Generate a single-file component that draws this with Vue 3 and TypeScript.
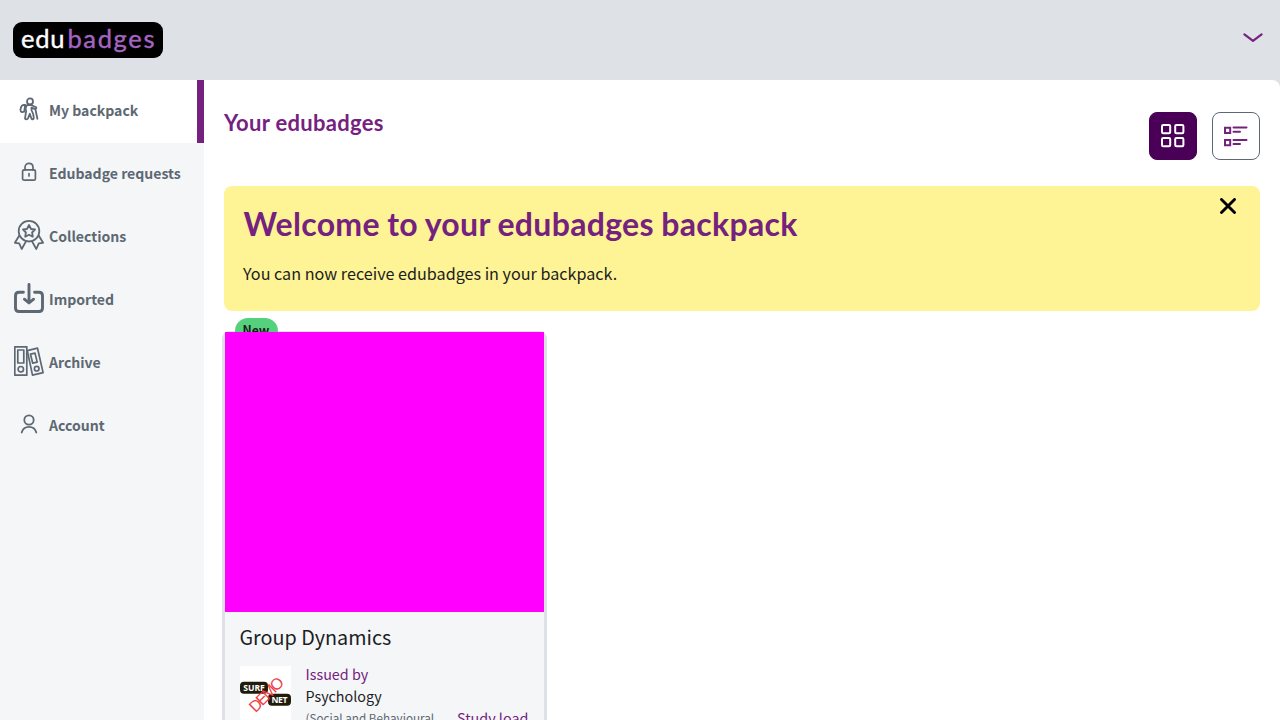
<script setup lang="ts">
import { ref } from 'vue'

interface NavItem {
  id: string
  label: string
}

const items: NavItem[] = [
  { id: 'backpack', label: 'My backpack' },
  { id: 'requests', label: 'Edubadge requests' },
  { id: 'collections', label: 'Collections' },
  { id: 'imported', label: 'Imported' },
  { id: 'archive', label: 'Archive' },
  { id: 'account', label: 'Account' },
]
const active = ref('backpack')
const view = ref<'grid' | 'list'>('grid')
const showWelcome = ref(true)
</script>

<template>
  <div class="page">
    <header class="header">
      <div class="logo"><span class="edu">edu</span><span class="badges">badges</span></div>
      <svg class="chevron" width="22" height="12" viewBox="0 0 22 12"><path d="M2.4 2.4 L11 8.8 L19.6 2.4" /></svg>
    </header>
    <div class="body">
      <nav class="sidebar">
        <a v-for="item in items" :key="item.id" class="nav-item" :class="{ active: item.id === active }" @click="active = item.id">
          <span class="icon">
            <svg v-if="item.id === 'backpack'" width="20" height="24" viewBox="0 0 20 24" stroke-width="1.8">
              <circle cx="11" cy="4.4" r="3" />
              <path d="M6.2 8 C3.2 7.2 1.8 9.8 1.5 12.6 C1.4 15 2.8 15.5 5.2 14.6 L6.2 8" />
              <path d="M8.4 7.8 C6.6 9.5 6.3 12 7.2 14 M8.4 7.8 L12.5 8.2 L17.2 10.3 C17.8 11.5 16.6 12.2 15.6 11.8 L12.4 10.6 L12.6 13.4 C14 15.8 14.9 18.5 14.8 21 C14.8 22.6 13 22.6 12.4 21.5 L10.8 16.8 L9 21.4 C8.4 22.7 6.6 22.6 6 21.5 C6.5 19 6.6 16.5 7.2 14 M16.4 12.3 L18.4 21.8" />
            </svg>
            <svg v-else-if="item.id === 'requests'" width="16" height="20" viewBox="0 0 16 20" stroke-width="1.7">
              <rect x="1.6" y="7.8" width="12.8" height="10.4" rx="1.5" />
              <path d="M4 8 V5.5 C4 0 12 0 12 5.5 V8 M8 11.7 V14" />
            </svg>
            <svg v-else-if="item.id === 'collections'" width="30" height="30" viewBox="0 0 30 30" stroke-width="1.8">
              <circle cx="15" cy="11.2" r="10.3" />
              <path d="M15 5 L17 9 L21 9.5 L18.1 12.5 L18.8 16.7 L15 14.7 L11.2 16.7 L11.9 12.5 L9 9.5 L13 9 Z" />
              <path d="M5.3 15.5 L.9 22.8 L5.2 23.4 L7.7 29 L12 21.4 M24.7 15.5 L29.1 22.8 L24.8 23.4 L22.3 29 L18 21.4" />
            </svg>
            <svg v-else-if="item.id === 'imported'" width="30" height="32" viewBox="0 0 30 32" stroke-width="2.9">
              <path d="M9.4 10.2 H5 Q1.5 10.2 1.5 13.8 V26 Q1.5 29.5 5 29.5 H25 Q28.5 29.5 28.5 26 V13.8 Q28.5 10.2 25 10.2 H20.6 M15 2.4 V20.5 M10.4 17.2 L15 21 L19.6 17.2" />
            </svg>
            <svg v-else-if="item.id === 'archive'" width="30" height="30" viewBox="0 0 30 30" stroke-width="1.7">
              <rect x=".8" y=".8" width="12" height="28.4" />
              <rect x="3.8" y="4" width="6" height="13" />
              <circle cx="6.8" cy="23.2" r="2.7" />
              <path d="M13.3 4.7 L23.5 2.2 L29.1 26.6 L18.5 29.1 Z" />
              <path d="M16.5 8.2 L21 7.1 L23.2 16.1 L18.7 17.2 Z" />
              <circle cx="22.7" cy="22.7" r="2.3" />
            </svg>
            <svg v-else width="18" height="20" viewBox="0 0 18 20" stroke-width="1.8">
              <circle cx="9" cy="6" r="4.7" />
              <path d="M1.7 18.5 C3.8 11 14.2 11 16.3 18.5" />
            </svg>
          </span>
          <span class="label">{{ item.label }}</span>
        </a>
      </nav>
      <main class="main">
        <div class="title-row">
          <h2>Your edubadges</h2>
          <div class="views">
            <button class="view" :class="{ on: view === 'grid' }" aria-label="Grid" @click="view = 'grid'">
              <svg width="24" height="24" viewBox="0 0 24 24">
                <rect x="1" y="1" width="8.2" height="8.2" rx="1.2" /><rect x="14.2" y="1" width="8.2" height="8.2" rx="1.2" />
                <rect x="1" y="14" width="8.2" height="8.2" rx="1.2" /><rect x="14.2" y="14" width="8.2" height="8.2" rx="1.2" />
              </svg>
            </button>
            <button class="view" :class="{ on: view === 'list' }" aria-label="List" @click="view = 'list'">
              <svg width="24" height="22" viewBox="0 0 24 22">
                <path d="M1 2.7 H6.2 V7.9 H1 Z M1 15 H6.2 V20.2 H1 Z M9.5 2.6 H22.5 M9.5 6.7 H16 M9.5 15 H22.5 M9.5 19.1 H16" />
              </svg>
            </button>
          </div>
        </div>
        <section v-if="showWelcome" class="welcome">
          <h1>Welcome to your edubadges backpack</h1>
          <p>You can now receive edubadges in your backpack.</p>
          <button class="close" aria-label="Close" @click="showWelcome = false">
            <svg width="16" height="16" viewBox="0 0 16 16"><path d="M1.5 1.5 L14.5 14.5 M14.5 1.5 L1.5 14.5" /></svg>
          </button>
        </section>
        <article class="card">
          <span class="new">New</span>
          <div class="art"></div>
          <div class="content">
            <h3>Group Dynamics</h3>
            <div class="details">
              <svg class="issuer-logo" width="51" height="54" viewBox="0 0 51 54">
                <rect width="51" height="54" fill="#fff" />
                <rect x="0" y="15.7" width="28" height="12" rx="4" fill="#211b0b" />
                <rect x="28" y="27.7" width="23" height="12" rx="4" fill="#211b0b" />
                <text x="3.3" y="24.7" class="surf" textLength="21.5">SURF</text>
                <text x="31.5" y="36.8" class="surf" textLength="16">NET</text>
                <text x="15.4" y="47.2" class="demo" transform="rotate(-45 15.4 47.2)" textLength="42">DEMO</text>
              </svg>
              <div class="issuer">
                <div class="purple">Issued by</div>
                <div>Psychology</div>
                <div class="faculty">(Social and Behavioural</div>
              </div>
              <div class="study purple">Study load</div>
            </div>
          </div>
        </article>
      </main>
    </div>
  </div>
</template>

<style>
body { margin: 0; overflow: hidden; }
</style>

<style scoped>
.page { width: 1280px; height: 720px; overflow: hidden; display: flex; flex-direction: column; background: #dee1e6; font-family: "Noto Sans CJK SC", "Noto Sans", sans-serif; color: #1c1d1f; }
.header { height: 80px; flex: none; display: flex; justify-content: space-between; align-items: center; padding: 0 16px 0 13px; box-sizing: border-box; }
.logo { width: 150px; height: 36px; box-sizing: border-box; background: #000; border-radius: 9px; padding-left: 8px; font: 25.5px/33px Lato, sans-serif; white-space: nowrap; }
.edu { color: #fff; letter-spacing: .8px; -webkit-text-stroke: .4px #fff; }
.badges { margin-left: 2px; color: #a565c2; letter-spacing: 1.65px; -webkit-text-stroke: .4px #a565c2; }
.chevron { margin-top: -4px; fill: none; stroke: #75217f; stroke-width: 2.2; stroke-linecap: round; stroke-linejoin: round; }
.body { height: 640px; display: flex; }
.sidebar { width: 204px; flex: none; background: #f4f6f8; }
.nav-item { height: 63px; box-sizing: border-box; display: flex; align-items: center; padding-left: 14px; color: #5d6873; cursor: pointer; }
.nav-item.active { background: #fff; border-right: 7px solid #75217f; }
.icon { width: 30px; height: 32px; margin: -5px 5px 0 0; display: flex; align-items: center; justify-content: center; }
.icon svg { fill: none; stroke: currentColor; stroke-linecap: round; stroke-linejoin: round; flex: none; }
.label { margin-top: -3px; font-size: 14.05px; font-weight: 700; line-height: 24px; white-space: nowrap; }
.main { flex: 1; min-width: 0; background: #fff; border-top-right-radius: 8px; padding: 32px 20px 0; box-sizing: border-box; }
.title-row { height: 48px; display: flex; justify-content: space-between; margin-bottom: 26px; }
h1, h2, h3, p { margin: 0; white-space: nowrap; }
h1, h2 { color: #75217f; font-family: Lato, sans-serif; font-weight: 700; }
h2 { font-size: 22px; line-height: 22px; letter-spacing: .3px; }
.views { display: flex; gap: 15px; }
.view { width: 48px; height: 48px; padding: 0; display: flex; align-items: center; justify-content: center; border: 1px solid #5d6873; border-radius: 8px; background: #fff; }
.view svg { fill: none; stroke: #75217f; stroke-width: 2; stroke-linecap: round; }
.view.on { background: #490056; border-color: #490056; }
.view.on svg { stroke: #fff; }
.welcome { position: relative; height: 125px; box-sizing: border-box; background: #fef495; border-radius: 8px; padding: 18px 20px; }
h1 { font-size: 32px; line-height: 40px; letter-spacing: .32px; word-spacing: -.7px; margin-left: -.5px; }
.welcome p { margin-top: 17px; margin-left: -1px; font-size: 16.16px; line-height: 24px; }
.close { position: absolute; right: 24px; top: 12px; padding: 0; width: 16px; height: 16px; border: 0; background: none; }
.close svg { display: block; fill: none; stroke: #000; stroke-width: 2.9; stroke-linecap: round; }
.card { position: relative; width: 325px; height: 430px; margin: 20px 0 0 -2px; box-sizing: border-box; border: solid #dee1e6; border-width: 1px 3px 3px; border-radius: 8px; background: #f4f6f8; }
.new { position: absolute; left: 9.5px; top: -14px; width: 43px; height: 26px; border-radius: 13px; background: #55d17d; font-size: 12.3px; font-weight: 700; line-height: 24px; text-align: center; }
.art { position: relative; height: 280px; background: #f0f; }
.content { padding: 11px 15px 0 14.5px; }
h3 { font-size: 19.75px; font-weight: 400; line-height: 28px; }
.details { display: flex; margin-top: 15px; font-size: 14.35px; line-height: 22px; white-space: nowrap; }
.issuer-logo { flex: none; margin-right: 15px; }
.surf { font: 700 8.6px "Open Sans", sans-serif; fill: #fff; }
.demo { font: 16px "Liberation Sans", sans-serif; fill: #ef3d42; }
.issuer { width: 151.5px; margin-top: -3px; }
.purple { color: #75217f; }
.faculty { font-size: 11.7px; color: #5d6873; }
.study { margin-top: 41px; }
</style>
